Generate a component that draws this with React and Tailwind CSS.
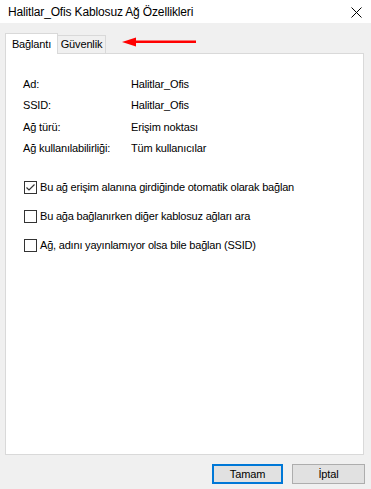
export default function App() {
  const info = [
    ["Ad:", "Halitlar_Ofis"],
    ["SSID:", "Halitlar_Ofis"],
    ["Ağ türü:", "Erişim noktası"],
    ["Ağ kullanılabilirliği:", "Tüm kullanıcılar"],
  ];
  const options = [
    ["Bu ağ erişim alanına girdiğinde otomatik olarak bağlan", true],
    ["Bu ağa bağlanırken diğer kablosuz ağları ara", false],
    ["Ağ, adını yayınlamıyor olsa bile bağlan (SSID)", false],
  ];

  return (
    <div
      className="w-[371px] h-[489px] bg-[#f0f0f0] flex flex-col text-[11px] tracking-[-0.15px] text-black overflow-hidden"
      style={{ fontFamily: '"Liberation Sans", Arial, sans-serif' }}
    >
      {/* title bar */}
      <div className="h-[23px] bg-white flex items-center justify-between pl-[8px] pr-[9px] shrink-0">
        <span className="text-[12px] leading-none">Halitlar_Ofis Kablosuz Ağ Özellikleri</span>
        <svg width="11" height="11" viewBox="0 0 11 11" className="mt-[1px]">
          <path d="M0.5 0.5 L10.5 10.5 M10.5 0.5 L0.5 10.5" stroke="#000" strokeWidth="1" />
        </svg>
      </div>

      {/* tabs */}
      <div className="flex items-end pl-[5px] pt-[9px] h-[30px] shrink-0">
        <div className="h-[21px] w-[53px] bg-white border border-b-0 border-[#d9d9d9] flex items-center justify-center relative z-10 -mb-px">
          Bağlantı
        </div>
        <div className="h-[18px] w-[48px] bg-[#f0f0f0] border border-l-0 border-b-0 border-[#d9d9d9] flex items-center justify-center">
          Güvenlik
        </div>
        <svg width="80" height="10" viewBox="0 0 80 10" className="ml-[16px] mb-[6px]">
          <path d="M12 3.5 L74 3.5 L74 6 L12 6 Z" fill="#f00" />
          <path d="M0 5 L14 0.5 L14 9.5 Z" fill="#f00" />
        </svg>
      </div>

      {/* panel */}
      <div className="ml-[5px] w-[359px] h-[402px] bg-white border border-[#d9d9d9] pt-[22px] pl-[17px] shrink-0">
        <div className="flex flex-col gap-[5.5px]">
          {info.map(([k, v]) => (
            <div key={k} className="flex h-[16px] items-center">
              <span className="w-[108px] shrink-0">{k}</span>
              <span>{v}</span>
            </div>
          ))}
        </div>
        <div className="flex flex-col gap-[13px] mt-[23px] pl-[1px]">
          {options.map(([t, c]) => (
            <div key={t} className="flex items-center h-[16px]">
              <div className="w-[13px] h-[13px] border border-[#333] bg-white flex items-center justify-center mr-[3px] shrink-0">
                {c && (
                  <svg width="11" height="11" viewBox="0 0 11 11">
                    <path d="M1.5 5.5 L4 8 L9.5 2.5" stroke="#333" strokeWidth="1.2" fill="none" />
                  </svg>
                )}
              </div>
              <span className="tracking-[-0.2px]">{t}</span>
            </div>
          ))}
        </div>
      </div>

      {/* buttons */}
      <div className="flex justify-end gap-[9px] pr-[6px] mt-[9px]">
        <button className="w-[71px] h-[20px] bg-[#e1e1e1] border-2 border-[#0078d7] flex items-center justify-center">
          Tamam
        </button>
        <button className="w-[73px] h-[20px] bg-[#e1e1e1] border border-[#adadad] flex items-center justify-center">
          İptal
        </button>
      </div>
    </div>
  );
}
